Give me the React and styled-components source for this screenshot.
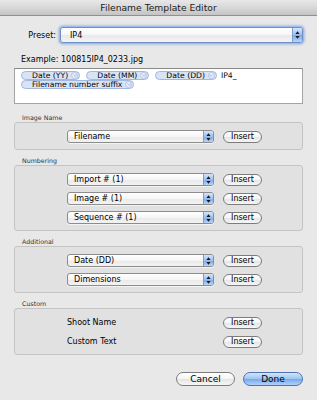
import React from "react";
import styled, { createGlobalStyle } from "styled-components";

const GlobalStyle = createGlobalStyle`
  html, body { margin: 0; padding: 0; background: #e8e8e8; }
  body { font-family: "DejaVu Sans", "Noto Sans", sans-serif; color: #000; }
  * { box-sizing: border-box; }
`;

const Window = styled.div`
  width: 317px;
  height: 400px;
  background: #e8e8e8;
  display: flex;
  flex-direction: column;
  overflow: hidden;
`;

const TitleBar = styled.div`
  height: 16px;
  line-height: 15px;
  text-align: center;
  font-size: 9.2px;
  color: #1c1c1c;
  background: linear-gradient(#e8e8e8, #d4d4d4 60%, #c4c4c4);
  border-bottom: 1px solid #909090;
  flex: none;
`;

const Content = styled.div`
  padding: 11px 14px 0 14px;
  display: flex;
  flex-direction: column;
`;

const PresetRow = styled.div`
  display: flex;
  align-items: center;
  height: 16px;
`;

const PresetLabel = styled.span`
  width: 42px;
  margin-right: 4px;
  text-align: right;
  font-size: 8px;
`;

const PopupBox = styled.div`
  display: flex;
  align-items: stretch;
  flex: ${(p) => (p.$grow ? "1" : "none")};
  width: ${(p) => (p.$grow ? "auto" : "147px")};
  height: ${(p) => p.$h}px;
  border: 1px solid ${(p) => (p.$focus ? "#6d8fc6" : "#8c8c8c")};
  border-radius: 3px;
  background: linear-gradient(#ffffff, #f6f6f6 50%, #e9e9e9 51%, #f3f3f3);
  box-shadow: ${(p) =>
    p.$focus
      ? "0 0 0 1px #9ebde9, 0 0 2px 2px rgba(110,155,220,0.45)"
      : "0 1px 0 rgba(255,255,255,0.6)"};
  overflow: hidden;
`;

const PopupText = styled.span`
  flex: 1;
  display: flex;
  align-items: center;
  padding-left: ${(p) => (p.$focus ? 9 : 6)}px;
  font-size: 8px;
  white-space: nowrap;
`;

const Stepper = styled.span`
  width: 10px;
  flex: none;
  display: flex;
  align-items: center;
  justify-content: center;
  border-left: 1px solid #7d9dd0;
  background: linear-gradient(#d6e5f9, #9dc0ee 50%, #78a8ea 51%, #b9d4f6);
`;

const Arrows = () => (
  <svg width="5" height="8" viewBox="0 0 5 8">
    <path d="M2.5 0.3 L4.6 3.1 H0.4 Z M2.5 7.7 L4.6 4.9 H0.4 Z" fill="#1a1a1a" />
  </svg>
);

const Popup = ({ children, h = 13, grow, focus }) => (
  <PopupBox $h={h} $grow={grow} $focus={focus}>
    <PopupText $focus={focus}>{children}</PopupText>
    <Stepper>
      <Arrows />
    </Stepper>
  </PopupBox>
);

const Example = styled.div`
  margin-top: 12px;
  padding-left: 7px;
  font-size: 8px;
  line-height: 9px;
`;

const TokenBox = styled.div`
  margin-top: 4px;
  height: 36px;
  background: #ffffff;
  border: 1px solid #a4a4a4;
  border-top-color: #8a8a8a;
  padding: 2px 6px 0 6px;
  display: flex;
  flex-wrap: wrap;
  align-content: flex-start;
  align-items: center;
  column-gap: 6px;
`;

const Token = styled.span`
  display: inline-flex;
  align-items: center;
  height: 9px;
  padding: 0 1px 0 10px;
  border: 1px solid #a2b8de;
  border-radius: 5px;
  background: #d8e3f5;
  font-size: 7.7px;
  line-height: 8px;
  white-space: nowrap;
`;

const TokenMenu = styled.span`
  width: 7px;
  height: 7px;
  margin-left: 3px;
  border-radius: 50%;
  background: #e9eff9;
  border: 1px solid #b4c6e6;
  display: flex;
  align-items: center;
  justify-content: center;
`;

const PlainText = styled.span`
  font-size: 7.7px;
  line-height: 9px;
  margin-left: -2px;
`;

const TokenChip = ({ children }) => (
  <Token>
    {children}
    <TokenMenu>
      <svg width="4" height="3" viewBox="0 0 4 3">
        <path d="M0.3 0.5 L2 2.4 L3.7 0.5" stroke="#9aafd6" strokeWidth="0.8" fill="none" />
      </svg>
    </TokenMenu>
  </Token>
);

const SectionLabel = styled.div`
  margin-top: ${(p) => p.$mt}px;
  height: 8px;
  line-height: 8px;
  padding-left: 8px;
  font-size: 6.3px;
  color: #333;
`;

const GroupBox = styled.div`
  border: 1px solid #c4c4c4;
  border-radius: 3px;
  background: #e1e1e1;
  padding: 7px 0 6px 52px;
  display: flex;
  flex-direction: column;
  gap: 6px;
`;

const Row = styled.div`
  display: grid;
  grid-template-columns: 147px 39px;
  column-gap: 9px;
  align-items: center;
  height: 13px;
`;

const RowText = styled.span`
  font-size: 8px;
  line-height: 13px;
`;

const PillButton = styled.button`
  width: ${(p) => p.$w}px;
  height: ${(p) => p.$h}px;
  border-radius: ${(p) => p.$h / 2}px;
  border: 1px solid ${(p) => (p.$primary ? "#4a74b4" : "#7c7c7c")};
  background: ${(p) =>
    p.$primary
      ? "linear-gradient(#d4e5fb, #9cc2f2 50%, #74a8ee 51%, #b2d2fa)"
      : "linear-gradient(#ffffff, #f4f4f4 50%, #e5e5e5 51%, #f6f6f6)"};
  font-family: "DejaVu Sans", sans-serif;
  font-size: ${(p) => p.$fs}px;
  color: #000;
  padding: 0;
  line-height: 1;
  display: flex;
  align-items: center;
  justify-content: center;
`;

const Insert = () => (
  <PillButton $w={39} $h={12} $fs={8}>
    Insert
  </PillButton>
);

const Footer = styled.div`
  margin-top: 17px;
  display: flex;
  justify-content: flex-end;
  gap: 8px;
`;

const popupRow = (label) => (
  <Row key={label}>
    <Popup>{label}</Popup>
    <Insert />
  </Row>
);

const textRow = (label) => (
  <Row key={label}>
    <RowText>{label}</RowText>
    <Insert />
  </Row>
);

export default function App() {
  return (
    <>
      <GlobalStyle />
      <Window>
        <TitleBar>Filename Template Editor</TitleBar>
        <Content>
          <PresetRow>
            <PresetLabel>Preset:</PresetLabel>
            <Popup h={16} grow focus>
              IP4
            </Popup>
          </PresetRow>
          <Example>Example: 100815IP4_0233.jpg</Example>
          <TokenBox>
            <TokenChip>Date (YY)</TokenChip>
            <TokenChip>Date (MM)</TokenChip>
            <TokenChip>Date (DD)</TokenChip>
            <PlainText>IP4_</PlainText>
            <TokenChip>Filename number suffix</TokenChip>
          </TokenBox>

          <SectionLabel $mt={10}>Image Name</SectionLabel>
          <GroupBox>{popupRow("Filename")}</GroupBox>

          <SectionLabel $mt={7}>Numbering</SectionLabel>
          <GroupBox>
            {popupRow("Import # (1)")}
            {popupRow("Image # (1)")}
            {popupRow("Sequence # (1)")}
          </GroupBox>

          <SectionLabel $mt={7}>Additional</SectionLabel>
          <GroupBox>
            {popupRow("Date (DD)")}
            {popupRow("Dimensions")}
          </GroupBox>

          <SectionLabel $mt={7}>Custom</SectionLabel>
          <GroupBox>
            {textRow("Shoot Name")}
            {textRow("Custom Text")}
          </GroupBox>

          <Footer>
            <PillButton $w={59} $h={14} $fs={9}>
              Cancel
            </PillButton>
            <PillButton $w={60} $h={14} $fs={9} $primary>
              Done
            </PillButton>
          </Footer>
        </Content>
      </Window>
    </>
  );
}
